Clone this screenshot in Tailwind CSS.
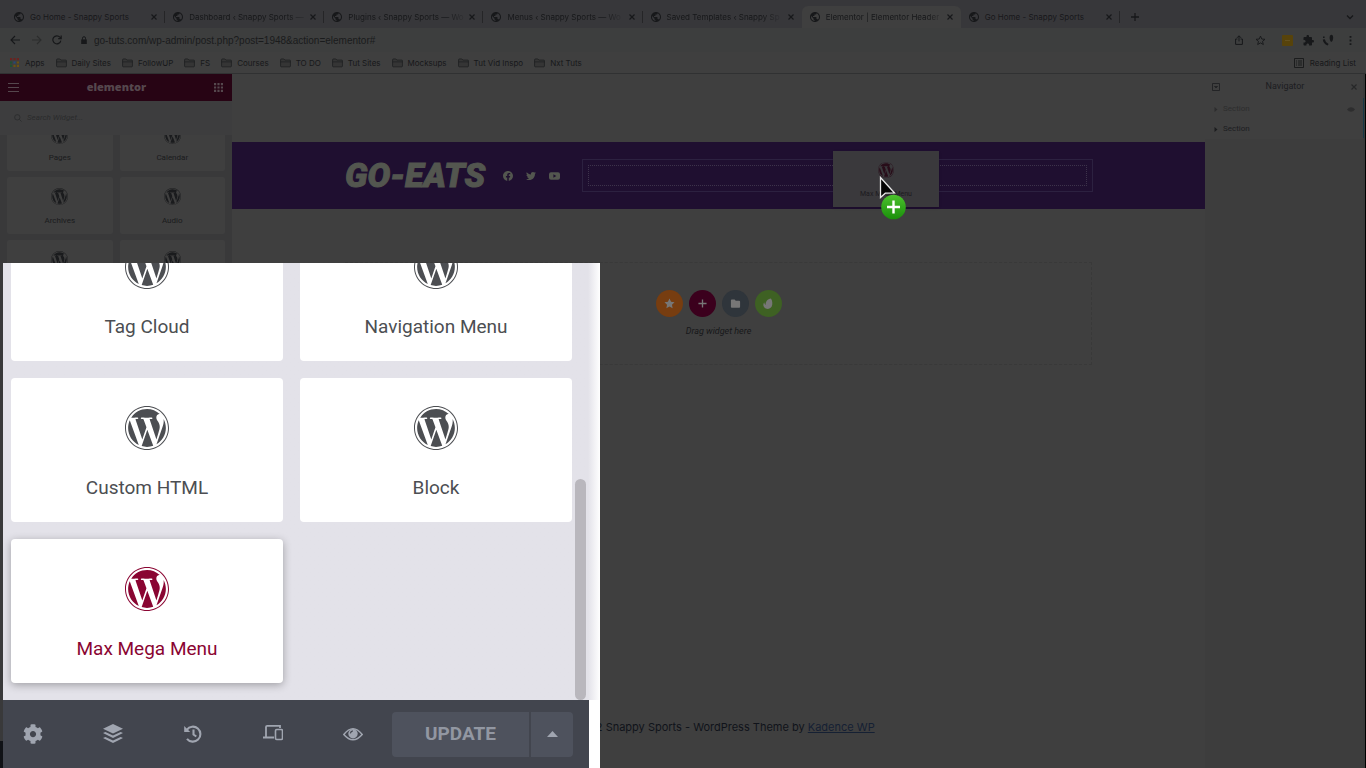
<!DOCTYPE html>
<html lang="en">
<head>
  <meta charset="UTF-8" />
  <meta name="viewport" content="width=device-width, initial-scale=1.0"/>
  <title>Elementor | Elementor Header</title>
  <script src="https://cdn.jsdelivr.net/npm/@tailwindcss/browser@4"></script>
</head>
<body class="relative flex h-screen flex-col overflow-hidden bg-[#3f3f3f] font-['Inter','Liberation_Sans',sans-serif] text-[#17181a]">

  <!-- Icon set -->
  <svg class="hidden">
    <symbol id="wp" viewBox="8 8 496 496"><path fill="currentColor" d="M61.7 169.4l101.5 278C92.2 413 43.3 340.2 43.3 256c0-30.9 6.6-60.1 18.4-86.6zm337.9 75.9c0-26.3-9.4-44.5-17.5-58.7-10.8-17.5-20.9-32.4-20.9-49.9 0-19.6 14.8-37.8 35.7-37.8.9 0 1.8.1 2.8.2-37.9-34.7-88.3-55.9-143.7-55.9-74.3 0-139.7 38.1-177.8 95.9 5 .2 9.7.3 13.7.3 22.2 0 56.7-2.7 56.7-2.7 11.5-.7 12.8 16.2 1.4 17.5 0 0-11.5 1.3-24.3 2l77.5 230.4L249.8 247l-33.1-90.8c-11.5-.7-22.3-2-22.3-2-11.5-.7-10.1-18.2 1.3-17.5 0 0 35.1 2.7 56 2.7 22.2 0 56.7-2.7 56.7-2.7 11.5-.7 12.8 16.2 1.4 17.5 0 0-11.5 1.3-24.3 2l76.9 228.7 21.2-70.9c9-29.4 16-50.5 16-68.7zm-139.9 29.3l-63.8 185.5c19.1 5.6 39.2 8.7 60.1 8.7 24.8 0 48.5-4.3 70.6-12.1-.6-.9-1.1-1.9-1.5-2.9l-65.4-179.2zm183-120.7c.9 6.8 1.4 14 1.4 21.9 0 21.6-4 45.8-16.2 76.2l-65 187.9C426.2 403 468.7 334.5 468.7 256c0-37-9.4-71.8-26-102.1zM504 256c0 136.8-111.3 248-248 248C119.2 504 8 392.7 8 256 8 119.2 119.2 8 256 8c136.7 0 248 111.2 248 248zm-11.4 0c0-130.5-106.2-236.6-236.6-236.6C125.5 19.4 19.4 125.5 19.4 256S125.6 492.6 256 492.6c130.5 0 236.6-106.1 236.6-236.6z"/></symbol>
    <symbol id="globe" viewBox="2 2 20 20"><path fill="currentColor" d="M12 2C6.48 2 2 6.48 2 12s4.48 10 10 10 10-4.48 10-10S17.52 2 12 2zm-1 17.93c-3.95-.49-7-3.85-7-7.93 0-.62.08-1.21.21-1.79L9 15v1c0 1.1.9 2 2 2v1.93zm6.9-2.54c-.26-.81-1-1.39-1.9-1.39h-1v-3c0-.55-.45-1-1-1H8v-2h2c.55 0 1-.45 1-1V7h2c1.1 0 2-.9 2-2v-.41c2.93 1.19 5 4.06 5 7.41 0 2.08-.8 3.97-2.1 5.39z"/></symbol>
    <symbol id="close" viewBox="0 0 8 8"><path d="M1.5 1.5l5 5M6.5 1.5l-5 5" stroke="currentColor" stroke-width="1.2" fill="none"/></symbol>
    <symbol id="folder" viewBox="0 0 12 10"><path d="M.6 8.2V1.6q0-1 1-1h2.6l1.2 1.2h5q1 0 1 1v5.4q0 1-1 1H1.6q-1 0-1-1zM.6 3.8h10.8" stroke="#202122" stroke-width=".9" fill="#353535"/></symbol>
    <symbol id="grid" viewBox="0 0 10 10"><path fill="currentColor" d="M0 0h2.4v2.4H0zM3.8 0h2.4v2.4H3.8zM7.6 0H10v2.4H7.6zM0 3.8h2.4v2.4H0zM3.8 3.8h2.4v2.4H3.8zM7.6 3.8H10v2.4H7.6zM0 7.6h2.4V10H0zM3.8 7.6h2.4V10H3.8zM7.6 7.6H10V10H7.6z"/></symbol>
  </svg>

  <!-- Browser Chrome -->
  <header class="shrink-0 border-b border-[#303132]">
    <!-- Tabs -->
    <div class="flex h-7 items-end bg-[#37373a] pl-[6px]">
      <nav class="flex w-[1114px] text-[8px] whitespace-nowrap">
        <a href="#" class="flex h-[22px] flex-1 items-center pl-2"><svg class="mr-[6px] size-[10px] shrink-0"><use href="#globe"/></svg>Go Home - Snappy Sports<svg class="mr-[6px] ml-auto size-2 shrink-0"><use href="#close"/></svg><span class="h-3 w-px bg-[#252527]"></span></a>
        <a href="#" class="flex h-[22px] flex-1 items-center pl-2"><svg class="mr-[6px] size-[10px] shrink-0"><use href="#globe"/></svg><span class="[mask-image:linear-gradient(to_right,black_85%,#0006)]">Dashboard ‹ Snappy Sports —</span><svg class="mr-[6px] ml-auto size-2 shrink-0"><use href="#close"/></svg><span class="h-3 w-px bg-[#252527]"></span></a>
        <a href="#" class="flex h-[22px] flex-1 items-center pl-2"><svg class="mr-[6px] size-[10px] shrink-0"><use href="#globe"/></svg><span class="[mask-image:linear-gradient(to_right,black_85%,#0003)]">Plugins ‹ Snappy Sports — Wo</span><svg class="mr-[6px] ml-auto size-2 shrink-0"><use href="#close"/></svg><span class="h-3 w-px bg-[#252527]"></span></a>
        <a href="#" class="flex h-[22px] flex-1 items-center pl-2"><svg class="mr-[6px] size-[10px] shrink-0"><use href="#globe"/></svg><span class="[mask-image:linear-gradient(to_right,black_85%,#0003)]">Menus ‹ Snappy Sports — Wo</span><svg class="mr-[6px] ml-auto size-2 shrink-0"><use href="#close"/></svg><span class="h-3 w-px bg-[#252527]"></span></a>
        <a href="#" class="flex h-[22px] flex-1 items-center pl-2"><svg class="mr-[6px] size-[10px] shrink-0"><use href="#globe"/></svg><span class="[mask-image:linear-gradient(to_right,black_85%,#0003)]">Saved Templates ‹ Snappy Sp</span><svg class="mr-[7px] ml-auto size-2 shrink-0"><use href="#close"/></svg></a>
        <a href="#" class="flex h-[22px] flex-1 items-center rounded-t-md bg-[#3f3f3f] pl-2"><svg class="mr-[6px] size-[10px] shrink-0"><use href="#globe"/></svg><span class="[mask-image:linear-gradient(to_right,black_90%,#0006)]">Elementor | Elementor Header</span><svg class="mr-[7px] ml-auto size-2 shrink-0"><use href="#close"/></svg></a>
        <a href="#" class="flex h-[22px] flex-1 items-center pl-2"><svg class="mr-[6px] size-[10px] shrink-0"><use href="#globe"/></svg>Go Home - Snappy Sports<svg class="mr-[6px] ml-auto size-2 shrink-0"><use href="#close"/></svg><span class="h-3 w-px bg-[#252527]"></span></a>
      </nav>
      <button aria-label="New tab" class="ml-[10px] flex h-[22px] items-center"><svg class="size-[10px]" viewBox="0 0 10 10"><path d="M5 1v8M1 5h8" stroke="currentColor" stroke-width="1.3"/></svg></button>
      <button aria-label="Search tabs" class="mr-3 ml-auto flex h-[22px] items-center"><svg class="size-2" viewBox="0 0 8 8"><path d="M1 2.5l3 3 3-3" fill="none" stroke="currentColor" stroke-width="1.3"/></svg></button>
    </div>
    <!-- Address bar -->
    <div class="flex h-6 items-center bg-[#3d3e3e] pr-[10px] pl-[10px]">
      <button aria-label="Back"><svg class="size-[10px]" viewBox="0 0 10 10"><path d="M5 1L1 5l4 4M1 5h9" fill="none" stroke="currentColor" stroke-width="1.1"/></svg></button>
      <button aria-label="Forward" class="ml-3 text-[#2c2d2d]"><svg class="size-[10px]" viewBox="0 0 10 10"><path d="M5 1l4 4-4 4M9 5H0" fill="none" stroke="currentColor" stroke-width="1.1"/></svg></button>
      <button aria-label="Reload" class="ml-[10px]"><svg class="size-[10px]" viewBox="0 0 10 10"><path d="M8.8 5.6A4 4 0 1 1 7.9 2.2L9 3.3M9.2 .6v3H6.2" fill="none" stroke="currentColor" stroke-width="1.2"/></svg></button>
      <svg class="ml-[18px] size-2" viewBox="0 0 8 8"><path d="M1.2 3.4h5.6V8H1.2z" fill="currentColor"/><path d="M2.5 3.6V2.2a1.5 1.5 0 0 1 3 0v1.4" fill="none" stroke="currentColor"/></svg>
      <input type="text" aria-label="Address" value="go-tuts.com/wp-admin/post.php?post=1948&amp;action=elementor#" class="ml-[6px] min-w-0 flex-1 font-['Liberation_Sans',sans-serif] text-[10px] text-[#1a1b1c]" />
      <div class="flex items-center">
        <svg class="size-[10px]" viewBox="0 0 10 10"><path d="M3.4 4H1.6v5.4h6.8V4H6.6M5 6.4V1M3 2.8L5 .8l2 2" fill="none" stroke="currentColor"/></svg>
        <svg class="ml-[11px] size-[11px]" viewBox="0 0 12 12"><path d="M6 1.2l1.4 3.2 3.5.3-2.7 2.3.9 3.4L6 8.6l-3.1 1.8.9-3.4L1.1 4.7l3.5-.3z" fill="none" stroke="currentColor"/></svg>
        <span class="ml-4 flex size-[11px] items-center justify-center rounded-[1px] bg-[#57430b]"><span class="h-px w-[5px] bg-[#65521e]"></span></span>
        <svg class="ml-[10px] size-[11px]" viewBox="1 1 22 22"><path fill="currentColor" d="M20.5 11H19V7c0-1.1-.9-2-2-2h-4V3.5C13 2.12 11.88 1 10.5 1S8 2.12 8 3.5V5H4c-1.1 0-1.99.9-1.99 2v3.8H3.5c1.49 0 2.7 1.21 2.7 2.7s-1.21 2.7-2.7 2.7H2V20c0 1.1.9 2 2 2h3.8v-1.5c0-1.49 1.21-2.7 2.7-2.7 1.49 0 2.7 1.21 2.7 2.7V22H17c1.1 0 2-.9 2-2v-4h1.5c1.38 0 2.5-1.12 2.5-2.5S21.88 11 20.5 11z"/></svg>
        <svg class="ml-2 size-3" viewBox="0 0 12 12"><path d="M1 2.5h1.6v1.6H1zM.8 5.5l2-.3q.4 3 3.800 4.800l-1 1.600Q1.200 9.500.8 5.500zM8 1.500q3-2 3.200 2-.2 4-2.200 4.500Q6.800 5 8 1.500z" fill="currentColor"/></svg>
        <svg class="ml-[11px] size-[11px]" viewBox="0 0 12 12"><path d="M5 1h2v2H5zM5 5h2v2H5zM5 9h2v2H5z" fill="currentColor"/></svg>
      </div>
    </div>
    <!-- Bookmarks -->
    <div class="flex h-[21px] items-center gap-[11px] bg-[#3f3f3f] px-[10px] text-[8px]">
      <a href="#" class="flex items-center gap-[6px]"><svg class="size-[9px]" viewBox="0 0 10 10"><path fill="#6a2320" d="M0 0h2.4v2.4H0zM3.8 0h2.4v2.4H3.8zM7.6 0H10v2.4H7.6z"/><path fill="#1f5131" d="M0 3.8h2.4v2.4H0zM0 7.6h2.4V10H0z"/><path fill="#254a78" d="M3.8 3.8h2.4v2.4H3.8z"/><path fill="#6b5210" d="M7.6 3.8H10v2.4H7.6zM3.8 7.6h2.4V10H3.8zM7.6 7.6H10V10H7.6z"/></svg>Apps</a>
      <a href="#" class="flex items-center gap-[5px]"><svg class="h-[10px] w-[11px]"><use href="#folder"/></svg>Daily Sites</a>
      <a href="#" class="flex items-center gap-[5px]"><svg class="h-[10px] w-[11px]"><use href="#folder"/></svg>FollowUP</a>
      <a href="#" class="flex items-center gap-[5px]"><svg class="h-[10px] w-[11px]"><use href="#folder"/></svg>FS</a>
      <a href="#" class="flex items-center gap-[5px]"><svg class="h-[10px] w-[11px]"><use href="#folder"/></svg>Courses</a>
      <a href="#" class="flex items-center gap-[5px]"><svg class="h-[10px] w-[11px]"><use href="#folder"/></svg>TO DO</a>
      <a href="#" class="flex items-center gap-[5px]"><svg class="h-[10px] w-[11px]"><use href="#folder"/></svg>Tut Sites</a>
      <a href="#" class="flex items-center gap-[5px]"><svg class="h-[10px] w-[11px]"><use href="#folder"/></svg>Mocksups</a>
      <a href="#" class="flex items-center gap-[5px]"><svg class="h-[10px] w-[11px]"><use href="#folder"/></svg>Tut Vid Inspo</a>
      <a href="#" class="flex items-center gap-[5px]"><svg class="h-[10px] w-[11px]"><use href="#folder"/></svg>Nxt Tuts</a>
      <button class="ml-auto flex items-center gap-[6px]"><svg class="size-[10px]" viewBox="0 0 10 10"><path d="M.5.5h9v9h-9zM2 3h1M4 3h4M2 5h1M4 5h4M2 7h1M4 7h4" fill="none" stroke="currentColor" stroke-width=".9"/></svg>Reading List</button>
    </div>
  </header>

  <div class="flex min-h-0 flex-1">
    <!-- Widgets Panel -->
    <aside class="flex w-[232px] shrink-0 flex-col bg-[#39393a] font-['Roboto',sans-serif] text-[#1a1b1d]">
      <div class="flex h-[27px] shrink-0 items-center justify-between bg-[#270414] px-2 text-[#55474d]">
        <button aria-label="Menu"><svg class="size-[11px]" viewBox="0 0 11 11"><path d="M0 1.5h11M0 5.5h11M0 9.5h11" stroke="currentColor" stroke-width="1.2"/></svg></button>
        <h1 class="font-['Open_Sans',sans-serif] text-[11px] font-extrabold">elementor</h1>
        <button aria-label="Widgets" class="pr-px"><svg class="size-[9px]"><use href="#grid"/></svg></button>
      </div>
      <label class="flex h-[34px] shrink-0 items-center gap-[5px] bg-[#3d3d3e] pl-[14px] text-[#2a2b2c]">
        <svg class="size-2" viewBox="0 0 8 8"><path d="M5.3 5.3L7.5 7.5M6 3.3a2.7 2.7 0 1 1-5.4 0 2.7 2.7 0 0 1 5.4 0z" fill="none" stroke="currentColor" stroke-width=".8"/></svg>
        <input type="text" placeholder="Search Widget..." class="w-40 text-[8px] italic placeholder:text-[#2a2b2c]" />
      </label>
      <div class="grid flex-1 grid-cols-2 content-start gap-x-[7px] gap-y-[6px] overflow-hidden px-[7px] text-[8px] leading-[10px]">
        <div class="flex h-9 flex-col items-center justify-end overflow-hidden rounded-b-xs bg-[#3f3f3f] pb-2"><svg class="mb-[9px] size-[17px] shrink-0"><use href="#wp"/></svg>Pages</div>
        <div class="flex h-9 flex-col items-center justify-end overflow-hidden rounded-b-xs bg-[#3f3f3f] pb-2"><svg class="mb-[9px] size-[17px] shrink-0"><use href="#wp"/></svg>Calendar</div>
        <div class="flex h-[57px] flex-col items-center justify-end rounded-xs bg-[#3f3f3f] pb-2"><svg class="mb-[11px] size-[17px]"><use href="#wp"/></svg>Archives</div>
        <div class="flex h-[57px] flex-col items-center justify-end rounded-xs bg-[#3f3f3f] pb-2"><svg class="mb-[11px] size-[17px]"><use href="#wp"/></svg>Audio</div>
        <div class="flex h-[57px] flex-col items-center rounded-xs bg-[#3f3f3f] pt-[11px]"><svg class="size-[17px]"><use href="#wp"/></svg></div>
        <div class="flex h-[57px] flex-col items-center rounded-xs bg-[#3f3f3f] pt-[11px]"><svg class="size-[17px]"><use href="#wp"/></svg></div>
      </div>
      <div class="h-[27px] shrink-0 bg-[#101216]"></div>
    </aside>

    <!-- Page Preview -->
    <main class="flex min-w-0 flex-1 flex-col">
      <section class="relative mt-[68px] flex h-[67px] shrink-0 items-center bg-[#1f0f30] pr-28 pl-[113px] text-[#53564f]">
        <h2 class="w-[143px] shrink-0 pb-[2px] font-['Roboto',sans-serif] text-[34px] leading-9 font-black whitespace-nowrap italic [-webkit-text-stroke:1px_#53564f]">GO-EATS</h2>
        <div class="mr-[22px] ml-[15px] flex items-center gap-[13px]">
          <svg class="size-[10px]" viewBox="8 8 496 496"><path fill="currentColor" d="M504 256C504 119 393 8 256 8S8 119 8 256c0 123.78 90.69 226.38 209.25 245V327.69h-63V256h63v-54.64c0-62.15 37-96.48 93.67-96.48 27.14 0 55.52 4.84 55.52 4.84v61h-31.28c-30.8 0-40.41 19.12-40.41 38.73V256h68.78l-11 71.69h-57.78V501C413.31 482.38 504 379.78 504 256z"/></svg>
          <svg class="size-[10px]" viewBox="0 0 512 512"><path fill="currentColor" d="M459.37 151.716c.325 4.548.325 9.097.325 13.645 0 138.72-105.583 298.558-298.558 298.558-59.452 0-114.68-17.219-161.137-47.106 8.447.974 16.568 1.299 25.34 1.299 49.055 0 94.213-16.568 130.274-44.832-46.132-.975-84.792-31.188-98.112-72.772 6.498.974 12.995 1.624 19.818 1.624 9.421 0 18.843-1.3 27.614-3.573-48.081-9.747-84.143-51.98-84.143-102.985v-1.299c13.969 7.797 30.214 12.67 47.431 13.319-28.264-18.843-46.781-51.005-46.781-87.391 0-19.492 5.197-37.36 14.294-52.954 51.655 63.675 129.3 105.258 216.365 109.807-1.624-7.797-2.599-15.918-2.599-24.04 0-57.828 46.782-104.934 104.934-104.934 30.213 0 57.502 12.67 76.67 33.137 23.715-4.548 46.456-13.32 66.599-25.34-7.798 24.366-24.366 44.833-46.132 57.827 21.117-2.273 41.584-8.122 60.426-16.243-14.292 20.791-32.161 39.308-52.628 54.253z"/></svg>
          <svg class="h-[10px] w-[11px]" viewBox="0 0 11 10"><path fill="currentColor" fill-rule="evenodd" d="M2 1.2h7q2 0 2 2v3.6q0 2-2 2H2q-2 0-2-2V3.2q0-2 2-2zM4.4 3.3v3.4L7.3 5z"/></svg>
        </div>
        <div class="h-[33px] flex-1 border border-[#2c2140] p-[5px]"><div class="h-full border border-dotted border-[#3d334b]"></div></div>
        <!-- Dragged widget -->
        <div class="absolute top-[9px] left-[601px] flex h-14 w-[106px] flex-col items-center justify-end bg-[#3a393c] pb-2 font-['Roboto',sans-serif] text-[7px] leading-[10px] text-[#1c1a1f] shadow"><svg class="mb-[11px] size-4 text-[#280d19]"><use href="#wp"/></svg>Max Mega Menu</div>
        <svg class="absolute top-[34px] left-[647px] h-[46px] w-8" viewBox="0 0 32 46">
          <defs><linearGradient id="plus" x2="0" y2="1"><stop stop-color="#4cc22d"/><stop offset="1" stop-color="#1a8f0b"/></linearGradient></defs>
          <path d="M1.5 1.5v20l4.800-4.300L15.500 17z" fill="#050505" stroke="#e8e8e8" stroke-width="1.3"/>
          <circle cx="14.5" cy="31" r="12.3" fill="url(#plus)"/>
          <path d="M14.5 24.5v13M8 31h13" stroke="#fff" stroke-width="2.4"/>
        </svg>
      </section>

      <section class="mx-[113px] mt-[53px] flex h-[103px] shrink-0 flex-col items-center border border-dashed border-[#393939] pt-[27px]">
        <div class="flex gap-[6px] text-[#777]">
          <button aria-label="Add favourite" class="flex size-[27px] items-center justify-center rounded-full bg-[#773d10]"><svg class="size-[11px]" viewBox="0 0 12 12"><path fill="currentColor" d="M6 .6l1.7 3.5 3.8.5-2.8 2.7.7 3.8L6 9.3l-3.4 1.8.7-3.8L.5 4.6l3.8-.5z"/></svg></button>
          <button aria-label="Add section" class="flex size-[27px] items-center justify-center rounded-full bg-[#3b001d]"><svg class="size-[9px]" viewBox="0 0 10 10"><path d="M5 .5v9M.5 5h9" stroke="currentColor" stroke-width="1.5"/></svg></button>
          <button aria-label="Add template" class="flex size-[27px] items-center justify-center rounded-full bg-[#2f353b]"><svg class="size-[11px]" viewBox="0 0 12 12"><path fill="currentColor" d="M2 1.5h3l1.3 1.4H10q1 0 1 1v5.6q0 1-1 1H2q-1 0-1-1v-7q0-1 1-1z"/></svg></button>
          <button aria-label="Envato" class="flex size-[27px] items-center justify-center rounded-full bg-[#3e6123]"><svg class="size-3" viewBox="0 0 12 12"><path fill="currentColor" d="M9 .5c1.600 2.500 1.700 6 .7 8-1.600 3-5.600 3.300-7.500.8C.9 7.500 1.200 5.800 2.200 4.300c.3 1.500.8 2.200 1.400 2.600C3.500 3.500 5.600 1 9 .5z"/></svg></button>
        </div>
        <p class="mt-2 font-['Roboto',sans-serif] text-[9px] leading-3 italic">Drag widget here</p>
      </section>

      <footer class="mt-auto pb-[33px] text-center text-[11px] leading-4 text-[#10131a]">© 2022 Snappy Sports - WordPress Theme by <a href="#" class="text-[#152033] underline">Kadence WP</a></footer>
    </main>

    <!-- Navigator -->
    <aside class="w-[158px] shrink-0 bg-[#3d3d3d] font-['Roboto',sans-serif] text-[8px] text-[#1c1d1f]">
      <div class="flex h-[25px] items-center justify-between bg-[#3f3f3f] pr-[5px] pl-[7px]">
        <button aria-label="Collapse all"><svg class="size-2" viewBox="0 0 8 8"><path d="M.5.5h7v7h-7zM2.5 3.5h3L4 5z" fill="none" stroke="currentColor" stroke-width=".8"/></svg></button>
        <h2 class="text-[9px]">Navigator</h2>
        <button aria-label="Close" class="text-[#262728]"><svg class="size-2"><use href="#close"/></svg></button>
      </div>
      <div class="flex h-5 items-center gap-[5px] bg-[#3f3f3f] pr-2 pl-[9px] text-[#2d2d2e]">
        <svg class="h-[5px] w-1" viewBox="0 0 4 5"><path d="M.5 0l3 2.5-3 2.5z" fill="currentColor"/></svg>Section
        <svg class="ml-auto h-[5px] w-2" viewBox="0 0 8 5"><path d="M0 2.5q4-4.5 8 0-4 4.5-8 0z" fill="currentColor"/></svg>
      </div>
      <div class="flex h-5 items-center gap-[5px] bg-[#3f3f3f] pl-[9px]">
        <svg class="h-[5px] w-1" viewBox="0 0 4 5"><path d="M.5 0l3 2.5-3 2.5z" fill="currentColor"/></svg>Section
      </div>
    </aside>
    <div class="w-[3px] shrink-0 border-r border-black bg-[#3a3b3b] pt-6"><div class="h-10 w-px bg-[#163846]"></div></div>
  </div>

  <!-- Magnified Panel -->
  <div class="absolute bottom-0 left-[3px] flex h-[505px] w-[597px] flex-col bg-white font-['Roboto',sans-serif]">
    <div class="relative flex-1 overflow-hidden bg-linear-to-r from-[#e3e2e9] from-98% to-white pl-2">
      <div class="flex h-full w-[561px] flex-wrap content-end gap-[17px] pb-[17px] text-[19px] leading-6 text-[#4c4e52]">
        <div class="flex h-[144px] w-[272px] flex-col items-center rounded-sm bg-white pt-7"><svg class="mb-[26px] size-11"><use href="#wp"/></svg>Tag Cloud</div>
        <div class="flex h-[144px] w-[272px] flex-col items-center rounded-sm bg-white pt-7"><svg class="mb-[26px] size-11"><use href="#wp"/></svg>Navigation Menu</div>
        <div class="flex h-[144px] w-[272px] flex-col items-center rounded-sm bg-white pt-7"><svg class="mb-[26px] size-11"><use href="#wp"/></svg>Custom HTML</div>
        <div class="flex h-[144px] w-[272px] flex-col items-center rounded-sm bg-white pt-7"><svg class="mb-[26px] size-11"><use href="#wp"/></svg>Block</div>
        <div class="flex h-[144px] w-[272px] flex-col items-center rounded-sm bg-white pt-7 text-[#8a0532] shadow-[0_2px_8px_rgba(0,0,0,0.3)]"><svg class="mb-[26px] size-11"><use href="#wp"/></svg>Max Mega Menu</div>
      </div>
      <div class="absolute right-[14px] bottom-0 h-[221px] w-[11px] rounded-full bg-[#b9b7bd]"></div>
    </div>
    <div class="mr-[11px] flex h-[68px] shrink-0 items-center bg-[#42454e] pl-5 text-[#a0a5b0]">
      <div class="flex gap-[60px]">
        <button aria-label="Settings" class="size-5"><svg class="size-5" viewBox="0 0 512 512"><path fill="currentColor" d="M487.4 315.7l-42.6-24.6c4.3-23.2 4.3-47 0-70.2l42.6-24.6c4.9-2.8 7.1-8.6 5.5-14-11.1-35.6-30-67.8-54.7-94.6-3.8-4.1-10-5.1-14.8-2.3L380.8 110c-17.9-15.4-38.5-27.3-60.8-35.1V25.8c0-5.6-3.9-10.5-9.4-11.7-36.7-8.2-74.3-7.8-109.2 0-5.5 1.2-9.4 6.1-9.4 11.7V75c-22.2 7.9-42.8 19.8-60.8 35.1L88.7 85.5c-4.9-2.8-11-1.9-14.8 2.3-24.7 26.7-43.6 58.9-54.7 94.6-1.7 5.4.6 11.2 5.5 14L67.3 221c-4.3 23.2-4.3 47 0 70.2l-42.6 24.6c-4.9 2.8-7.1 8.6-5.5 14 11.1 35.6 30 67.8 54.7 94.6 3.8 4.1 10 5.1 14.8 2.3l42.6-24.6c17.9 15.4 38.5 27.3 60.8 35.1v49.2c0 5.6 3.9 10.5 9.4 11.7 36.7 8.2 74.3 7.8 109.2 0 5.5-1.2 9.4-6.1 9.4-11.7v-49.2c22.2-7.9 42.8-19.8 60.8-35.1l42.6 24.6c4.9 2.8 11 1.9 14.8-2.3 24.7-26.7 43.6-58.9 54.7-94.6 1.5-5.5-.7-11.3-5.6-14.1zM256 336c-44.1 0-80-35.9-80-80s35.9-80 80-80 80 35.9 80 80-35.9 80-80 80z"/></svg></button>
        <button aria-label="Navigator" class="size-5"><svg class="size-5" viewBox="0 0 20 20"><path fill="currentColor" d="M10 0l10 4.800-10 4.800L0 4.800zM0 9l2.400-1.100L10 11.600l7.600-3.700L20 9l-10 4.900zM0 14l2.400-1.100 7.600 3.700 7.600-3.700L20 14l-10 4.900z"/></svg></button>
        <button aria-label="History" class="size-5"><svg class="size-5" viewBox="0 0 20 20"><path d="M3.8 5.8A7.5 7.5 0 1 1 4 14.8M10.5 5.5v5l2.8 2" fill="none" stroke="currentColor" stroke-width="2.1"/><path d="M1.2 2v6h6z" fill="currentColor"/></svg></button>
        <button aria-label="Responsive mode" class="size-5"><svg class="size-5" viewBox="0 0 20 20"><path d="M3 12.5V3q0-1.2 1.2-1.2H17V4M0 13.5h11" fill="none" stroke="currentColor" stroke-width="1.8"/><rect x="12.5" y="5.5" width="7" height="10" rx="1.2" fill="none" stroke="currentColor" stroke-width="1.6"/></svg></button>
        <button aria-label="Preview" class="size-5"><svg class="size-5" viewBox="0 0 20 20"><path d="M.8 10.5Q10-1 19.2 10.5 10 21 .8 10.5z" fill="none" stroke="currentColor" stroke-width="1.5"/><circle cx="10" cy="9.8" r="4.7" fill="currentColor"/><path d="M7.3 9.3q.4-2 2.5-2.4" fill="none" stroke="#42454e" stroke-width="1.2"/></svg></button>
      </div>
      <div class="ml-[29px] flex gap-[2px]">
        <button class="h-[45px] w-[137px] rounded-l-sm bg-[#4e525d] text-[19px] font-bold text-[#9297a2]">UPDATE</button>
        <button aria-label="Save options" class="flex h-[45px] w-[42px] items-center justify-center rounded-r-sm bg-[#4e525d]"><svg class="h-[6px] w-[11px]" viewBox="0 0 11 6"><path d="M0 6L5.5 0 11 6z" fill="currentColor"/></svg></button>
      </div>
    </div>
  </div>

</body>
</html>
